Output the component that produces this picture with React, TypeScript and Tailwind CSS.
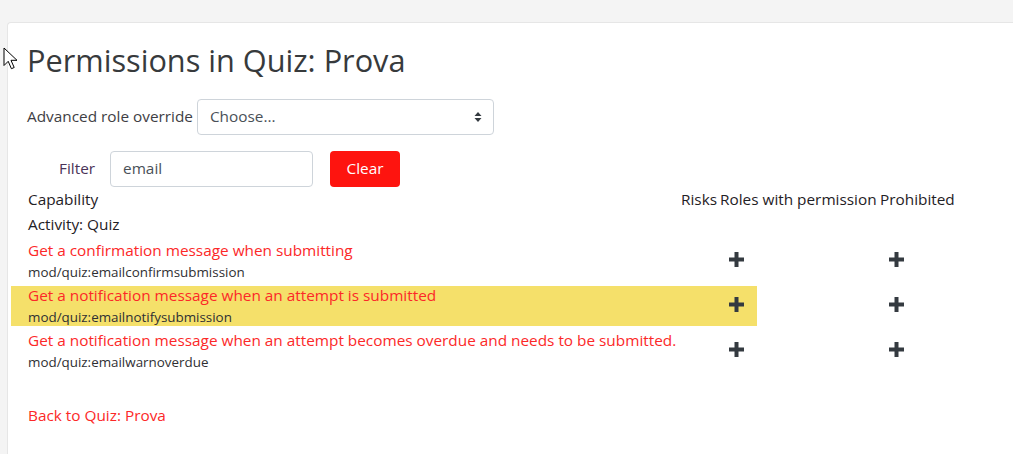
import React from 'react';

const rows = [
  { name: 'Get a confirmation message when submitting', code: 'mod/quiz:emailconfirmsubmission', hl: false },
  { name: 'Get a notification message when an attempt is submitted', code: 'mod/quiz:emailnotifysubmission', hl: true },
  {
    name: 'Get a notification message when an attempt becomes overdue and needs to be submitted.',
    code: 'mod/quiz:emailwarnoverdue',
    hl: false,
  },
];

function Plus() {
  return (
    <svg width="15" height="15" viewBox="0 0 15 15" className="block">
      <path d="M5.5 0h4v5.5H15v4H9.5V15h-4V9.5H0v-4h5.5z" fill="#343a40" />
    </svg>
  );
}

function Cursor() {
  return (
    <svg width="15" height="24" viewBox="0 0 15 24" className="absolute left-[3px] top-[47px]">
      <path
        d="M1 1v17.5l4.2-4.2 3.2 7.4 2.8-1.2-3.2-7.2h6z"
        fill="#fff"
        stroke="#000"
        strokeWidth="1"
        strokeLinejoin="round"
      />
    </svg>
  );
}

export default function App() {
  return (
    <div
      className="relative min-h-[454px] bg-[#f4f4f4] pt-[22px] pl-[7px] text-[#373a3c] overflow-hidden"
      style={{ fontFamily: '"Open Sans", "Noto Sans", sans-serif' }}
    >
      <div className="h-[432px] rounded-tl-[4px] border-t border-l border-[#e6e6e6] bg-white pt-[19px]">
        {/* TITLE */}
        <h2 className="pl-[19px] text-[30.7px] leading-[36px] font-normal text-[#373a3c]">
          Permissions in Quiz: Prova
        </h2>

        {/* ROLE OVERRIDE */}
        <div className="mt-[21px] flex items-center pl-[19px]">
          <span className="text-[15.35px] text-[#3e3e44]">Advanced role override</span>
          <div className="ml-[4px] flex h-[36px] w-[297px] items-center justify-between rounded-[4px] border border-[#ced4da] pl-[12px] pr-[11px]">
            <span className="text-[15.35px] text-[#495057]">Choose...</span>
            <svg width="8" height="12" viewBox="0 0 8 12">
              <path d="M4 1l3.5 4h-7z M4 11l3.5-4h-7z" fill="#343a40" />
            </svg>
          </div>
        </div>

        {/* FILTER */}
        <div className="mt-[16px] flex items-center pl-[51px]">
          <span className="text-[15.35px] text-[#4a3357]">Filter</span>
          <div className="ml-[15px] flex h-[36px] w-[203px] items-center rounded-[4px] border border-[#ced4da] pl-[12px]">
            <span className="text-[15.35px] text-[#495057]">email</span>
          </div>
          <button className="ml-[17px] h-[36px] w-[70px] rounded-[4px] bg-[#fe140f] text-[15.35px] text-white">
            Clear
          </button>
        </div>

        {/* TABLE */}
        <div className="mt-[1px] pl-[3px]">
          <div className="grid grid-cols-[653px_39px_160px_1fr] pl-[17px] text-[15.35px] leading-[22px] text-[#1f2125]">
            <span>Capability</span>
            <span>Risks</span>
            <span>Roles with permission</span>
            <span>Prohibited</span>
          </div>
          <div className="mt-[3px] pl-[17px] text-[15.35px] leading-[22px] text-[#1f2125]">
            Activity: Quiz
          </div>

          <div className="mt-[6px] flex flex-col gap-[5px]">
            {rows.map((r) => (
              <div
                key={r.code}
                className={
                  'grid h-[40px] grid-cols-[653px_39px_160px_1fr] items-start pl-[17px] ' +
                  (r.hl ? 'bg-[linear-gradient(to_right,#f5e06a_746px,transparent_746px)]' : '')
                }
              >
                <div className="flex flex-col">
                  <a className="text-[15.35px] leading-[19px] text-[#fc2828] whitespace-nowrap">{r.name}</a>
                  <span className="mt-[2px] text-[13.4px] leading-[20px] text-[#2f2f33]">{r.code}</span>
                </div>
                <div />
                <div className="pl-[9px] pt-[11px]">
                  <Plus />
                </div>
                <div className="pl-[9px] pt-[11px]">
                  <Plus />
                </div>
              </div>
            ))}
          </div>

          <div className="mt-[32px] pl-[17px]">
            <a className="text-[15.35px] leading-[20px] text-[#fc2828]">Back to Quiz: Prova</a>
          </div>
        </div>
      </div>
      <Cursor />
    </div>
  );
}
